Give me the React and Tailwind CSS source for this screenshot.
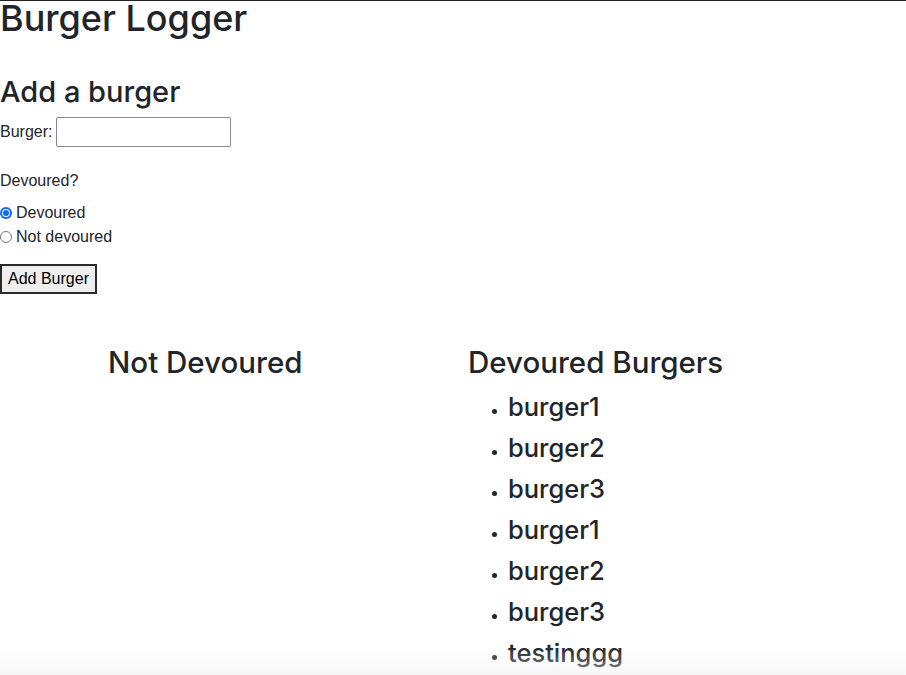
import React from 'react';

const devoured = ['burger1', 'burger2', 'burger3', 'burger1', 'burger2', 'burger3', 'testinggg'];

const Radio = ({ checked, label }) => (
  <label className="flex items-center h-[24px] text-[16px]">
    {checked ? (
      <span className="w-[12px] h-[12px] rounded-full bg-[#0a6cff] flex items-center justify-center">
        <span className="w-[8px] h-[8px] rounded-full bg-white flex items-center justify-center">
          <span className="w-[6px] h-[6px] rounded-full bg-[#0a6cff]" />
        </span>
      </span>
    ) : (
      <span className="w-[12px] h-[12px] rounded-full border border-[#767676] bg-white" />
    )}
    <span className="ml-[4px]">{label}</span>
  </label>
);

export default function App() {
  return (
    <div
      className="relative h-[675px] overflow-hidden border-t border-[#222] bg-white text-[#212529]"
      style={{ fontFamily: '"Liberation Sans", Arial, sans-serif' }}
    >
      <h1 className="text-[36px] leading-[34px] font-medium" style={{ fontFamily: 'Inter, sans-serif' }}>
        Burger Logger
      </h1>

      {/* Add form */}
      <h2 className="mt-[39px] text-[29px] leading-[36px] font-medium" style={{ fontFamily: 'Inter, sans-serif' }}>
        Add a burger
      </h2>
      <div className="mt-[7px] flex items-center h-[30px] text-[16px]">
        <span>Burger:</span>
        <input type="text" className="ml-[4px] w-[175px] h-[30px] border border-[#8a8a8a] rounded-[2px] bg-white" />
      </div>
      <p className="mt-[24px] text-[16px] leading-[20px]">Devoured?</p>
      <div className="mt-[10px]">
        <Radio checked label="Devoured" />
        <Radio label="Not devoured" />
      </div>
      <button className="mt-[15px] w-[97px] h-[30px] border-2 border-[#2b2b2b] bg-[#efefef] text-[16px] text-black">
        Add Burger
      </button>

      {/* Burger columns */}
      <div className="mx-auto mt-[50px] w-[720px] grid grid-cols-2" style={{ fontFamily: 'Inter, sans-serif' }}>
        <div className="px-[15px]">
          <h3 className="text-[29.5px] leading-[36px] font-medium">Not Devoured</h3>
        </div>
        <div className="px-[15px]">
          <h3 className="text-[29.5px] leading-[36px] font-medium">Devoured Burgers</h3>
          <ul className="pl-[40px] mt-[6px] list-disc marker:text-[14px]">
            {devoured.map((b, i) => (
              <li key={i} className="text-[25.5px] leading-[41px] font-medium">
                {b}
              </li>
            ))}
          </ul>
        </div>
      </div>

      <div className="pointer-events-none absolute bottom-0 left-0 right-0 h-[28px] bg-gradient-to-b from-transparent to-[#f0f0f0]/50" />
    </div>
  );
}
